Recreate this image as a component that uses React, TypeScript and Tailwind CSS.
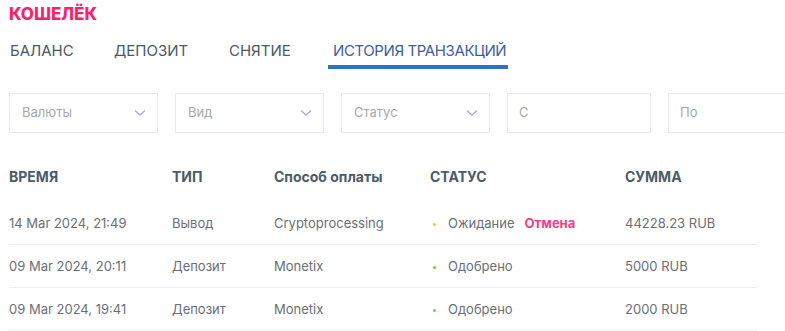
import React from 'react';

const tabs = [
  { label: 'БАЛАНС', w: 'w-[104px]' },
  { label: 'ДЕПОЗИТ', w: 'w-[115px]' },
  { label: 'СНЯТИЕ', w: 'w-[104px]' },
  { label: 'ИСТОРИЯ ТРАНЗАКЦИЙ', w: '' },
];

const rows = [
  { time: '14 Mar 2024, 21:49', type: 'Вывод', method: 'Cryptoprocessing', status: 'Ожидание', pending: true, sum: '44228.23 RUB' },
  { time: '09 Mar 2024, 20:11', type: 'Депозит', method: 'Monetix', status: 'Одобрено', pending: false, sum: '5000 RUB' },
  { time: '09 Mar 2024, 19:41', type: 'Депозит', method: 'Monetix', status: 'Одобрено', pending: false, sum: '2000 RUB' },
];

const Chevron = () => (
  <svg width="12" height="8" viewBox="0 0 12 8" fill="none">
    <path d="M1 1.5 6 6l5-4.5" stroke="#aab0cc" strokeWidth="1.4" />
  </svg>
);

const Select = ({ label }: { label: string }) => (
  <div className="w-[149px] h-[40px] shrink-0 border border-[#e9e9e9] flex items-center justify-between pl-[12px] pr-[11px]">
    <span className="text-[13px] text-[#a9a9a9]">{label}</span>
    <Chevron />
  </div>
);

const Input = ({ label, w }: { label: string; w: string }) => (
  <div className={`${w} h-[40px] shrink-0 border border-[#e9e9e9] flex items-center pl-[11px]`}>
    <span className="text-[13px] text-[#a9a9a9]">{label}</span>
  </div>
);

export default function App() {
  return (
    <div className="w-[785px] h-[331px] overflow-hidden bg-white font-['Inter',sans-serif]">
      <div className="pl-[10px] pt-[4px]">
        <h1 className="-ml-[1px] text-[17px] leading-[20px] font-extrabold text-[#fd1f6c]">КОШЕЛЁК</h1>
        <div className="flex mt-[17px]">
          {tabs.map((t, i) => (
            <div key={t.label} className={`flex flex-col shrink-0 ${t.w}`}>
              <span className={`text-[15px] leading-[20px] ${i === 3 ? 'text-[#3f5d9c] tracking-[-0.4px]' : 'text-[#4b5964]'}`}>{t.label}</span>
              {i === 3 && <div className="h-[4px] mt-[4px] bg-[#2f72c9] -ml-[5px] -mr-[2px]" />}
            </div>
          ))}
        </div>
      </div>

      <div className="flex gap-[17px] pl-[9px] mt-[24px]">
        <Select label="Валюты" />
        <Select label="Вид" />
        <Select label="Статус" />
        <Input label="С" w="w-[144px]" />
        <Input label="По" w="w-[150px]" />
      </div>

      <div className="w-[748px] ml-[9px] mt-[28px]">
        <div className="flex h-[30px] items-center text-[14px] font-bold text-[#4d5b66]">
          <div className="w-[163px]">ВРЕМЯ</div>
          <div className="w-[102px]">ТИП</div>
          <div className="w-[156px]">Способ оплаты</div>
          <div className="w-[195px]">СТАТУС</div>
          <div>СУММА</div>
        </div>
        <div className="mt-[11px]">
          {rows.map((r) => (
            <div key={r.time} className="flex h-[43px] pt-[2px] items-center border-b border-[#eeeeee] text-[13px] text-[#6b6f74]">
              <div className="w-[163px]">{r.time}</div>
              <div className="w-[102px]">{r.type}</div>
              <div className="w-[156px]">{r.method}</div>
              <div className="w-[195px] flex items-center">
                <span className={`w-[3px] h-[3px] rounded-full ml-[3px] mr-[12px] ${r.pending ? 'bg-[#ffc400]' : 'bg-[#5ee01a]'}`} />
                <span>{r.status}</span>
                {r.pending && <span className="ml-[10px] font-bold text-[#f0428a]">Отмена</span>}
              </div>
              <div>{r.sum}</div>
            </div>
          ))}
        </div>
      </div>
    </div>
  );
}
